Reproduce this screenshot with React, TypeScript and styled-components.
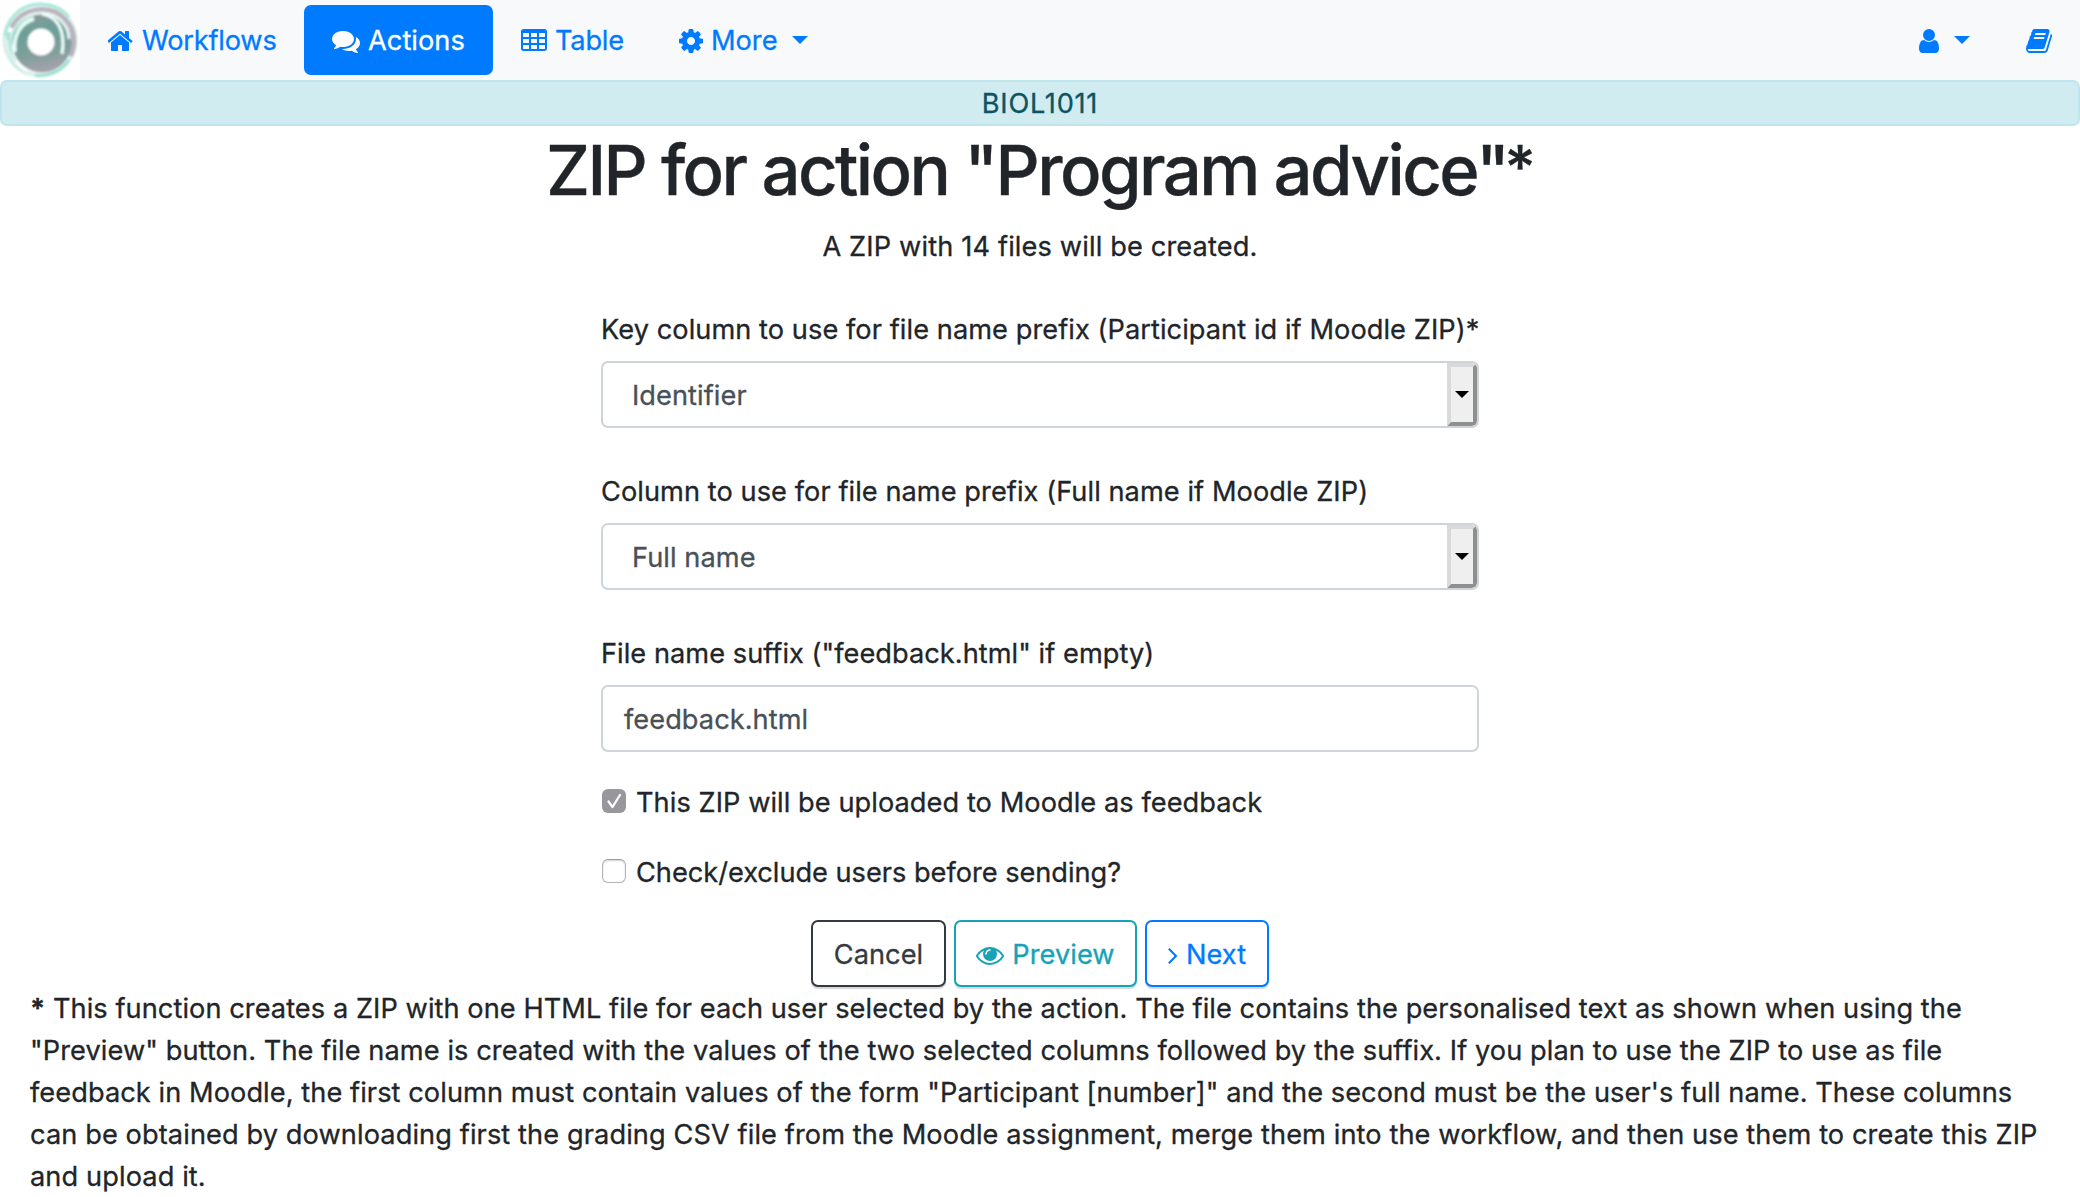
import React from "react";
import styled, { createGlobalStyle } from "styled-components";

const GlobalStyle = createGlobalStyle`
  * { box-sizing: border-box; }
  body {
    margin: 0;
    background: #fff;
    color: #212529;
    font-family: Inter, "Liberation Sans", sans-serif;
    font-size: 27.2px;
    line-height: 42px;
    overflow: hidden;
  }
`;

const Text = styled.span<{ $track?: number; $drop?: number }>`
  letter-spacing: ${(p) => p.$track ?? 0.06}px;
  padding-top: ${(p) => p.$drop ?? 0}px;
  white-space: pre;
  -webkit-text-stroke: 0.3px currentColor;
`;

const Navbar = styled.nav`
  display: flex;
  height: 80px;
  background: #f8f9fa;
`;

const Brand = styled.div`
  width: 80px;
  height: 80px;
  background: #fff;
`;

const NavItem = styled.a<{ $width: number; $active?: boolean }>`
  display: flex;
  align-items: center;
  gap: 8px;
  width: ${(p) => p.$width}px;
  height: 70px;
  margin: 5px 0;
  padding: 0 0 0 28px;
  border-radius: 7px;
  color: ${(p) => (p.$active ? "#fff" : "#007bff")};
  background: ${(p) => (p.$active ? "#007bff" : "transparent")};
`;

const NavSpacer = styled.div`
  flex: 1;
`;

const Caret = styled.i<{ $gap: number }>`
  width: 0;
  height: 0;
  margin: 0 0 0 ${(p) => p.$gap}px;
  border: 8px solid transparent;
  border-top-color: currentColor;
  border-bottom: 0;
`;

const Glyph = styled.svg`
  display: block;
  flex: none;
  height: 28px;
  fill: currentColor;
  margin-top: 2px;
`;

const CourseBar = styled.div`
  height: 46px;
  padding-top: 1px;
  border: 2px solid #bee5eb;
  border-radius: 7px;
  background: #d1ecf1;
  color: #0c5460;
  text-align: center;
`;

const Title = styled.h1`
  margin: 2px 0 14px;
  font-size: 68.8px;
  font-weight: 500;
  line-height: 84px;
  text-align: center;
`;

const TitleMark = styled.span`
  margin: 0 1px 0 -3px;
  font-size: 60px;
  line-height: 0;
  vertical-align: 6px;
`;

const Lead = styled.p`
  margin: 0;
  text-align: center;
`;

const Form = styled.form`
  width: 878px;
  margin: 41px auto 0;
`;

const Field = styled.div<{ $last?: boolean }>`
  display: flex;
  flex-direction: column;
  gap: 10px;
  height: ${(p) => (p.$last ? 148 : 162)}px;
`;

const Control = styled.div<{ $indent: number }>`
  display: flex;
  align-items: center;
  justify-content: space-between;
  height: 67px;
  padding-left: ${(p) => p.$indent}px;
  border: 2px solid #ced4da;
  border-radius: 7px;
  color: #495057;
  overflow: hidden;
`;

const DropButton = styled.span`
  display: flex;
  align-items: center;
  justify-content: center;
  width: 30px;
  height: 63px;
  border: 4px solid;
  border-color: #d9d9d9 #8f8f8f #8f8f8f #d9d9d9;
  border-radius: 0 5px 5px 0;
  background: #efefef;
`;

const DropArrow = styled.i`
  border: 7px solid transparent;
  border-top-color: #000;
  border-bottom: 0;
`;

const CheckRow = styled.label`
  display: flex;
  align-items: center;
  gap: 10px;
  height: 42px;
  margin: 0 0 28px;
`;

const Box = styled.span<{ $checked?: boolean }>`
  display: block;
  width: 24px;
  height: 24px;
  margin: 0 0 2px 1px;
  border-radius: 6px;
  border: ${(p) => (p.$checked ? "0" : "1px solid #b4b4b4")};
  border-top-color: #9a9a9a;
  background: ${(p) => (p.$checked ? "#98979c" : "#fff")};
  box-shadow: ${(p) => (p.$checked ? "none" : "inset 0 1px 2px rgba(0,0,0,.18)")};
`;

const Tick = styled.svg`
  display: block;
  fill: none;
  stroke: #fff;
  stroke-width: 2.3;
  stroke-linecap: round;
  stroke-linejoin: round;
`;

const Buttons = styled.div`
  display: flex;
  justify-content: center;
  gap: 8px;
  margin-top: -1px;
`;

const Button = styled.button<{ $color: string; $width: number }>`
  display: flex;
  align-items: center;
  justify-content: center;
  gap: 8px;
  width: ${(p) => p.$width}px;
  height: 67px;
  padding: 0;
  border: 2px solid ${(p) => p.$color};
  border-radius: 7px;
  background: #fff;
  color: ${(p) => p.$color};
  font: inherit;
  box-shadow: 0 2px 1px rgba(0, 0, 0, 0.16);
`;

const Note = styled.p`
  margin: 0;
  padding: 1px 30px 0;
`;

const Line = styled(Text)`
  display: block;
`;

const ICONS = {
  home: [64, 1664, "M1408 992v480q0 26-19 45t-45 19h-384v-384h-256v384h-384q-26 0-45-19t-19-45v-480q0-1 .5-3t.5-3l575-474 575 474q1 2 1 6zm223-69l-62 74q-8 9-21 11h-3q-13 0-21-7l-692-577-692 577q-12 8-24 7-13-2-21-11l-62-74q-8-10-7-23.5t11-21.5l719-599q32-26 76-26t76 26l244 204v-195q0-14 9-23t23-9h192q14 0 23 9t9 23v408l219 182q10 8 11 21.5t-7 23.5z"],
  comments: [0, 1792, "M1408 768q0 139-94 257t-256.5 186.5-353.5 68.5q-86 0-176-16-124 88-278 128-36 9-86 16h-3q-11 0-20.5-8t-11.5-21q-1-3-1-6.5t.5-6.5 2-6l2.5-5t3.5-5.5 4-5 4.5-5 4-4.5q5-6 23-25t26-29.5 22.5-29 25-38.5 20.5-44q-124-72-195-177t-71-224q0-139 94-257t256.5-186.5 353.5-68.5 353.5 68.5 256.5 186.5 94 257zm384 256q0 120-71 224.5t-195 176.5q10 24 20.5 44t25 38.5 22.5 29 26 29.5 23 25q1 1 4 4.5t4.5 5 4 5 3.5 5.5l2.5 5t2 6 .5 6.5-1 6.5q-3 14-13 22t-22 7q-50-7-86-16-154-40-278-128-90 16-176 16-271 0-472-132 58 4 88 4 161 0 309-45t264-129q125-92 192-212t67-254q0-77-23-152 129 71 204 178t75 230z"],
  table: [64, 1664, "M224 128h1344q66 0 113 47t47 113v1088q0 66-47 113t-113 47h-1344q-66 0-113-47t-47-113v-1088q0-66 47-113t113-47zM192 416v192q0 32 32 32h320q32 0 32-32v-192q0-32-32-32h-320q-32 0-32 32zM704 416v192q0 32 32 32h320q32 0 32-32v-192q0-32-32-32h-320q-32 0-32 32zM1216 416v192q0 32 32 32h320q32 0 32-32v-192q0-32-32-32h-320q-32 0-32 32zM192 800v192q0 32 32 32h320q32 0 32-32v-192q0-32-32-32h-320q-32 0-32 32zM704 800v192q0 32 32 32h320q32 0 32-32v-192q0-32-32-32h-320q-32 0-32 32zM1216 800v192q0 32 32 32h320q32 0 32-32v-192q0-32-32-32h-320q-32 0-32 32zM192 1184v192q0 32 32 32h320q32 0 32-32v-192q0-32-32-32h-320q-32 0-32 32zM704 1184v192q0 32 32 32h320q32 0 32-32v-192q0-32-32-32h-320q-32 0-32 32zM1216 1184v192q0 32 32 32h320q32 0 32-32v-192q0-32-32-32h-320q-32 0-32 32z"],
  cog: [128, 1536, "M1152 896q0-106-75-181t-181-75-181 75-75 181 75 181 181 75 181-75 75-181zm512-109v222q0 12-8 23t-20 13l-185 28q-19 54-39 91 35 50 107 138 10 12 10 25t-9 23q-27 37-99 108t-94 71q-12 0-26-9l-138-108q-44 23-91 38-16 136-29 186-7 28-36 28h-222q-14 0-24.5-8.5t-11.5-21.5l-28-184q-49-16-90-37l-141 107q-10 9-25 9-14 0-25-11-126-114-165-168-7-10-7-23 0-12 8-23 15-21 51-66.5t54-70.5q-27-50-41-99l-183-27q-13-2-21-12.5t-8-23.5v-222q0-12 8-23t19-13l186-28q14-46 39-92-40-57-107-138-10-12-10-24 0-10 9-23 26-36 98.5-107.5t94.5-71.5q13 0 26 10l138 107q44-23 91-38 16-136 29-186 7-28 36-28h222q14 0 24.5 8.5t11.5 21.5l28 184q49 16 90 37l142-107q9-9 24-9 13 0 25 10 129 119 165 170 7 8 7 22 0 12-8 23-15 21-51 66.5t-54 70.5q26 50 41 98l183 28q13 2 21 12.5t8 23.5z"],
  user: [256, 1280, "M1536 1399q0 109-62.5 187t-150.5 78h-854q-88 0-150.5-78t-62.5-187q0-85 8.5-160.5t31.5-152 58.5-131 94-89 134.5-34.5q131 128 313 128t313-128q76 0 134.5 34.5t94 89 58.5 131 31.5 152 8.5 160.5zm-256-887q0 159-112.5 271.5t-271.5 112.5-271.5-112.5-112.5-271.5 112.5-271.5 271.5-112.5 271.5 112.5 112.5 271.5z"],
  book: [64, 1664, "M1703 478q40 57 18 129l-275 906q-19 64-76.5 107.5t-122.5 43.5h-923q-77 0-148.5-53.5t-99.5-131.5q-24-67-2-127 0-4 3-27t4-37q1-8-3-21.5t-3-19.5q2-11 8-21t16.5-23.5 16.5-23.5q23-38 45-91.5t30-91.5q3-10 .5-30t-.5-28q3-11 17-28t17-23q21-36 42-92t25-90q1-9-2.5-32t.5-28q4-13 22-30.5t22-22.5q19-26 42.5-84.5t27.5-96.5q1-8-3-25.5t-2-26.5q2-8 9-18t18-23 17-21q8-12 16.5-30.5t15-35 16-36 19.5-32 26.5-23.5 36-11.5 47.5 5.5l-1 3q38-9 51-9h761q74 0 114 56t18 130l-274 906q-36 119-71.5 153.5t-128.5 34.5h-869q-27 0-38 15-11 16-1 43 24 70 144 70h923q29 0 56-15.5t35-41.5l300-987q7-22 5-57 38 15 59 43zm-1064 2q-4 13 2 22.5t20 9.5h608q13 0 25.5-9.5t16.5-22.5l21-64q4-13-2-22.5t-20-9.5h-608q-13 0-25.5 9.5t-16.5 22.5zm-83 256q-4 13 2 22.5t20 9.5h608q13 0 25.5-9.5t16.5-22.5l21-64q4-13-2-22.5t-20-9.5h-608q-13 0-25.5 9.5t-16.5 22.5z"],
  eye: [0, 1792, "M1664 960q-152-236-381-353 61 104 61 225 0 185-131.5 316.5t-316.5 131.5-316.5-131.5-131.5-316.5q0-121 61-225-229 117-381 353 133 205 333.5 326.5t434.5 121.5 434.5-121.5 333.5-326.5zm-720-384q0-20-14-34t-34-14q-125 0-214.5 89.5t-89.5 214.5q0 20 14 34t34 14 34-14 14-34q0-86 61-147t147-61q20 0 34-14t14-34zm848 384q0 34-20 69-140 230-376.5 368.5t-499.5 138.5-499.5-139-376.5-368q-20-35-20-69t20-69q140-229 376.5-368t499.5-139 499.5 139 376.5 368q20 35 20 69z"],
  angle: [576, 640, "M1171 960q0 13-10 23l-466 466q-10 10-23 10t-23-10l-50-50q-10-10-10-23t10-23l393-393-393-393q-10-10-10-23t10-23l50-50q10-10 23-10t23 10l466 466q10 10 10 23z"],
} as const;

function Icon({ name }: { name: keyof typeof ICONS }) {
  const [x, width, d] = ICONS[name];
  return (
    <Glyph width={width / 64} viewBox={`${x} 0 ${width} 1792`}>
      <path d={d} fillRule={name === "table" ? "evenodd" : "nonzero"} />
    </Glyph>
  );
}

function Logo() {
  return (
    <svg width="80" height="80" viewBox="0 0 80 80" fill="none">
      <defs>
        <linearGradient id="body" x1="0.4" y1="0" x2="0.6" y2="1">
          <stop offset="0" stopColor="#8d9a9a" />
          <stop offset="0.3" stopColor="#6aa098" />
          <stop offset="0.65" stopColor="#7f9f9b" />
          <stop offset="1" stopColor="#a9a3ae" />
        </linearGradient>
        <filter id="soft" x="-10%" y="-10%" width="120%" height="120%">
          <feGaussianBlur stdDeviation="0.8" />
        </filter>
      </defs>
      <g filter="url(#soft)">
        <circle cx="40" cy="40" r="35.500" stroke="#d9efea" strokeWidth="4" />
        <path d="M5 36C7 17 22 4 40 4c13 0 23 5 29 13" stroke="#9fe6d5" strokeWidth="2.500" />
        <path d="M12 28C22 8 50 4 65 20c10 11 10 24 5 36" stroke="#b9b3bd" strokeWidth="6" />
        <circle cx="42" cy="43" r="29.500" fill="url(#body)" />
        <path d="M11 40C14 22 28 12 43 13c16 1 26 13 26 26" stroke="#e6f3f0" strokeWidth="3" />
        <path d="M15 62C5 46 11 22 34 17" stroke="#b4e3d9" strokeWidth="3" />
        <path d="M42 14c15 2 24 16 20 40" stroke="#eefffb" strokeWidth="3" />
        <path d="M34 19C20 23 13 36 15 52" stroke="#e6fff9" strokeWidth="3.500" />
        <path d="M9 32c-5 20 5 39 24 43 14 2 28-3 36-15" stroke="#8fe0cc" strokeWidth="2.500" />
        <path d="M7 40c0 17 12 32 28 36" stroke="#eef8f6" strokeWidth="2" />
        <circle cx="41" cy="42" r="13.500" fill="#fff" />
      </g>
    </svg>
  );
}

const NOTE_LINES: [string, number][] = [
  [" This function creates a ZIP with one HTML file for each user selected by the action. The file contains the personalised text as shown when using the", 0.06],
  ['"Preview" button. The file name is created with the values of the two selected columns followed by the suffix. If you plan to use the ZIP to use as file', 0.08],
  ['feedback in Moodle, the first column must contain values of the form "Participant [number]" and the second must be the user\'s full name. These columns', 0.07],
  ["can be obtained by downloading first the grading CSV file from the Moodle assignment, merge them into the workflow, and then use them to create this ZIP", 0.095],
  ["and upload it.", 0.1],
];

export default function App() {
  return (
    <>
      <GlobalStyle />
      <Navbar>
        <Brand><Logo /></Brand>
        <NavItem $width={224}><Icon name="home" /><Text $drop={2} $track={-0.2}>Workflows</Text></NavItem>
        <NavItem $width={189} $active><Icon name="comments" /><Text $drop={2}>Actions</Text></NavItem>
        <NavItem $width={158}><Icon name="table" /><Text $drop={2} $track={-0.2}>Table</Text></NavItem>
        <NavItem $width={186}><Icon name="cog" /><Text $drop={2} $track={0}>More</Text><Caret $gap={6} /></NavItem>
        <NavSpacer />
        <NavItem $width={107}><Icon name="user" /><Caret $gap={7} /></NavItem>
        <NavItem $width={82}><Icon name="book" /></NavItem>
      </Navbar>
      <CourseBar><Text $track={0.75}>BIOL1011</Text></CourseBar>
      <Title><Text $track={-2.57}>ZIP for action "Program advice"<TitleMark>*</TitleMark></Text></Title>
      <Lead><Text $track={0.14}>A ZIP with 14 files will be created.</Text></Lead>
      <Form>
        <Field>
          <Text>Key column to use for file name prefix (Participant id if Moodle ZIP)*</Text>
          <Control $indent={29}><Text $drop={3}>Identifier</Text><DropButton><DropArrow /></DropButton></Control>
        </Field>
        <Field>
          <Text>Column to use for file name prefix (Full name if Moodle ZIP)</Text>
          <Control $indent={29}><Text $drop={3}>Full name</Text><DropButton><DropArrow /></DropButton></Control>
        </Field>
        <Field $last>
          <Text $track={0.04}>File name suffix ("feedback.html" if empty)</Text>
          <Control $indent={21}><Text $drop={3}>feedback.html</Text></Control>
        </Field>
        <CheckRow>
          <Box $checked>
            <Tick width="24" height="24" viewBox="0 0 24 24">
              <path d="M6.500 12.500l4 5.500 7.500-12" />
            </Tick>
          </Box>
          <Text $drop={1}>This ZIP will be uploaded to Moodle as feedback</Text>
        </CheckRow>
        <CheckRow><Box /><Text $drop={1} $track={-0.02}>Check/exclude users before sending?</Text></CheckRow>
      </Form>
      <Buttons>
        <Button $color="#343a40" $width={135}><Text $drop={2}>Cancel</Text></Button>
        <Button $color="#17a2b8" $width={183}><Icon name="eye" /><Text $drop={2}>Preview</Text></Button>
        <Button $color="#007bff" $width={124}><Icon name="angle" /><Text $drop={2}>Next</Text></Button>
      </Buttons>
      <Note>
        {NOTE_LINES.map(([line, track], i) => (
          <Line key={i} $track={track}>{i === 0 && <b>*</b>}{line}</Line>
        ))}
      </Note>
    </>
  );
}
